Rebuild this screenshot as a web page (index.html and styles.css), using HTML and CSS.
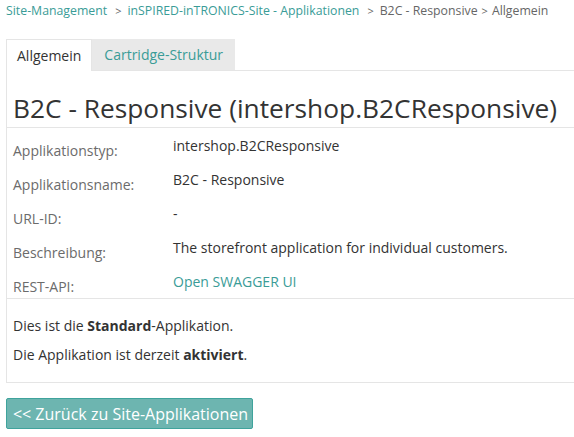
FILE: index.html
```html
<!DOCTYPE html>
<html lang="de">
<head>
<meta charset="utf-8">
<title>B2C - Responsive</title>
<link rel="stylesheet" href="styles.css">
</head>
<body>
<div class="page">
  <nav class="breadcrumb">
    <a href="#">Site-Management</a><span class="sep">&gt;</span><a href="#">inSPIRED-inTRONICS-Site - Applikationen</a><span class="sep">&gt;</span>B2C - Responsive<span class="sep tight">&gt;</span>Allgemein
  </nav>

  <div class="tabs">
    <div class="tab active">Allgemein</div>
    <a class="tab" href="#">Cartridge-Struktur</a>
  </div>

  <div class="panel">
    <h1 class="title">B2C - Responsive (intershop.B2CResponsive)</h1>
    <div class="props">
      <div class="label">Applikationstyp:</div>
      <div class="value">intershop.B2CResponsive</div>
      <div class="label">Applikationsname:</div>
      <div class="value">B2C - Responsive</div>
      <div class="label">URL-ID:</div>
      <div class="value">-</div>
      <div class="label">Beschreibung:</div>
      <div class="value">The storefront application for individual customers.</div>
      <div class="label">REST-API:</div>
      <div class="value"><a href="#">Open SWAGGER UI</a></div>
    </div>
    <div class="notes">
      <p>Dies ist die <b>Standard</b>-Applikation.</p>
      <p>Die Applikation ist derzeit <b>aktiviert</b>.</p>
    </div>
  </div>

  <button class="back" type="button">&lt;&lt; Zurück zu Site-Applikationen</button>
</div>
</body>
</html>
```

FILE: styles.css
```css
html, body {
  margin: 0;
  padding: 0;
  background: #fff;
}
body {
  font-family: "Open Sans", "Liberation Sans", sans-serif;
  color: #333;
  font-size: 14px;
}
a {
  color: #3a9c97;
  text-decoration: none;
}
.page {
  padding: 0 0 0 6px;
}
.breadcrumb {
  font-size: 12.3px;
  line-height: 22px;
  color: #666;
  white-space: nowrap;
}
.breadcrumb .sep {
  font-size: 11px;
  margin: 0 6px 0 8px;
}
.breadcrumb .sep.tight {
  margin: 0 4px 0 4px;
}
.tabs {
  margin-top: 17px;
  display: flex;
  border-bottom: 1px solid #e5e5e5;
  height: 31px;
}
.tab {
  display: block;
  font-size: 14px;
  line-height: 31px;
  padding: 0 12px;
  background: #e9e9e9;
  color: #3a9c97;
}
.tab.active {
  background: #fff;
  color: #333;
  padding: 0 10px;
  border: 1px solid #e5e5e5;
  border-bottom: none;
  box-sizing: border-box;
  height: 32px;
  margin-bottom: -1px;
}
.panel {
  border-left: 1px solid #e5e5e5;
  border-bottom: 1px solid #e5e5e5;
}
.title {
  margin: 0;
  padding: 22px 6px 3px;
  font-size: 26.3px;
  font-weight: normal;
  line-height: 31px;
  color: #333;
  white-space: nowrap;
  border-bottom: 1px solid #e5e5e5;
}
.props {
  display: grid;
  grid-template-columns: 160px 1fr;
  grid-auto-rows: 34px;
  padding-left: 6px;
  border-bottom: 1px solid #e5e5e5;
}
.label {
  padding-top: 13px;
  line-height: 20px;
  color: #6b6b6b;
}
.value {
  padding-top: 8px;
  line-height: 20px;
  color: #333;
}
.notes {
  padding: 17px 6px 17px;
}
.notes p {
  margin: 0;
  line-height: 20px;
}
.notes p + p {
  margin-top: 9px;
}
.back {
  margin-top: 15px;
  display: block;
  width: 247px;
  height: 31px;
  padding: 0 0 0 2px;
  font-family: "Open Sans", "Liberation Sans", sans-serif;
  font-size: 16px;
  color: #fff;
  background: #6db5b0;
  border: 1px solid #3fa39c;
  border-radius: 2px;
  cursor: pointer;
}
```
